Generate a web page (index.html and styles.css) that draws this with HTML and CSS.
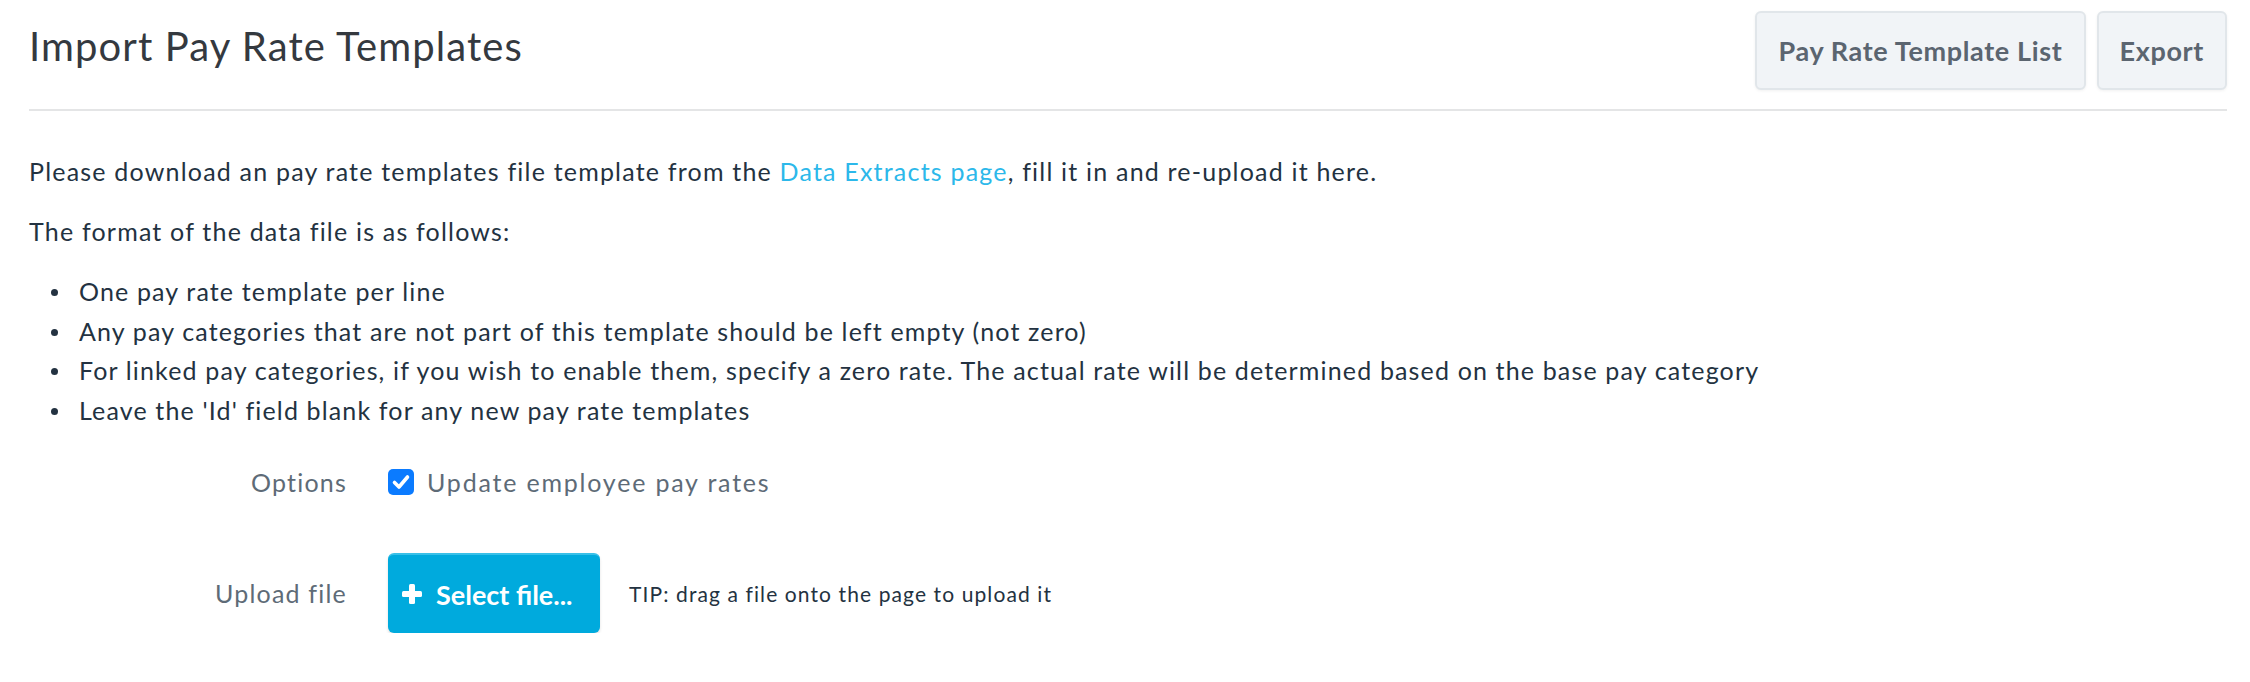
FILE: index.html
```html
<!DOCTYPE html>
<html lang="en">
<head>
<meta charset="utf-8">
<title>Import Pay Rate Templates</title>
<link rel="stylesheet" href="styles.css">
</head>
<body>
<div class="page">
  <header class="header">
    <h1 class="title">Import Pay Rate Templates</h1>
    <div class="actions">
      <button class="btn">Pay Rate Template List</button>
      <button class="btn">Export</button>
    </div>
  </header>

  <p class="para first">Please download an pay rate templates file template from the <a class="link" href="#">Data Extracts page</a>, fill it in and re-upload it here.</p>
  <p class="para">The format of the data file is as follows:</p>
  <ul class="rules">
    <li>One pay rate template per line</li>
    <li>Any pay categories that are not part of this template should be left empty (not zero)</li>
    <li>For linked pay categories, if you wish to enable them, specify a zero rate. The actual rate will be determined based on the base pay category</li>
    <li>Leave the 'Id' field blank for any new pay rate templates</li>
  </ul>

  <div class="form-row options-row">
    <div class="label">Options</div>
    <label class="control check">
      <span class="checkbox"><svg viewBox="0 0 26 26" width="26" height="26"><path d="M6.5 13.5 L11 18 L19.5 8" fill="none" stroke="#fff" stroke-width="3.6" stroke-linecap="round" stroke-linejoin="round"/></svg></span>
      <span>Update employee pay rates</span>
    </label>
  </div>

  <div class="form-row upload-row">
    <div class="label">Upload file</div>
    <div class="control">
      <button class="btn-primary"><svg class="plus" viewBox="0 0 22 22" width="22" height="22"><rect x="8" y="1" width="6" height="20" rx="1.5" fill="#fff"/><rect x="1" y="8" width="20" height="6" rx="1.5" fill="#fff"/></svg><span>Select file...</span></button>
      <span class="tip">TIP: drag a file onto the page to upload it</span>
    </div>
  </div>
</div>
</body>
</html>
```

FILE: styles.css
```css
html, body {
  margin: 0;
  padding: 0;
  background: #ffffff;
}

body {
  font-family: Lato, "Open Sans", "Liberation Sans", sans-serif;
  color: #233241;
}

.page {
  padding: 11px 23px 0 29px;
}

.header {
  display: flex;
  justify-content: space-between;
  align-items: flex-start;
  border-bottom: 2px solid #e4e5e6;
  padding-bottom: 19px;
}

.title {
  margin: 0;
  font-weight: 400;
  font-size: 40px;
  letter-spacing: 1.1px;
  line-height: 70px;
  color: #34393f;
}

.actions {
  display: flex;
  gap: 11px;
}

.btn {
  height: 79px;
  padding: 0 21px;
  background: #f1f4f7;
  border: 2px solid #e1e6ea;
  border-radius: 6px;
  box-shadow: 0 1px 3px rgba(0, 0, 0, 0.06);
  font-family: inherit;
  font-size: 27px;
  font-weight: 700;
  letter-spacing: 0.65px;
  color: #5b6570;
}

.para {
  margin: 0;
  font-size: 25px;
  letter-spacing: 1.2px;
  line-height: 40px;
}

.para.first {
  margin-top: 40px;
  margin-bottom: 20px;
}

.link {
  color: #2cb8ea;
  text-decoration: none;
}

.rules {
  margin: 21px 0 0;
  padding-left: 22px;
  list-style: none;
  font-size: 25px;
  letter-spacing: 1.15px;
  line-height: 39.5px;
}

.rules li::before {
  content: "";
  display: inline-block;
  width: 7px;
  height: 7px;
  border-radius: 50%;
  background: #233241;
  margin-right: 21px;
  vertical-align: middle;
  position: relative;
  top: -2px;
}

.form-row {
  display: flex;
  align-items: center;
}

.label {
  width: 318px;
  text-align: right;
  font-size: 25px;
  letter-spacing: 1.2px;
  color: #5e6b77;
  flex: none;
}

.control {
  margin-left: 41px;
  display: flex;
  align-items: center;
}

.options-row {
  margin-top: 37px;
}

.check {
  font-size: 25px;
  letter-spacing: 1.8px;
  color: #5e6b77;
  gap: 13px;
}

.checkbox {
  width: 26px;
  height: 26px;
  border-radius: 5px;
  background: #0b7bff;
  display: flex;
}

.upload-row {
  margin-top: 56px;
}

.btn-primary {
  display: flex;
  align-items: center;
  gap: 13px;
  width: 212px;
  height: 80px;
  padding: 0 0 0 13px;
  background: #00aadd;
  border: none;
  border-top: 2px solid #39c0e8;
  border-radius: 6px;
  box-shadow: 0 2px 3px rgba(0, 0, 0, 0.12);
  font-family: inherit;
  font-size: 27px;
  font-weight: 700;
  color: #ffffff;
}

.plus {
  flex: none;
}

.tip {
  margin-left: 29px;
  font-size: 21px;
  letter-spacing: 1.1px;
  color: #233241;
}
```
